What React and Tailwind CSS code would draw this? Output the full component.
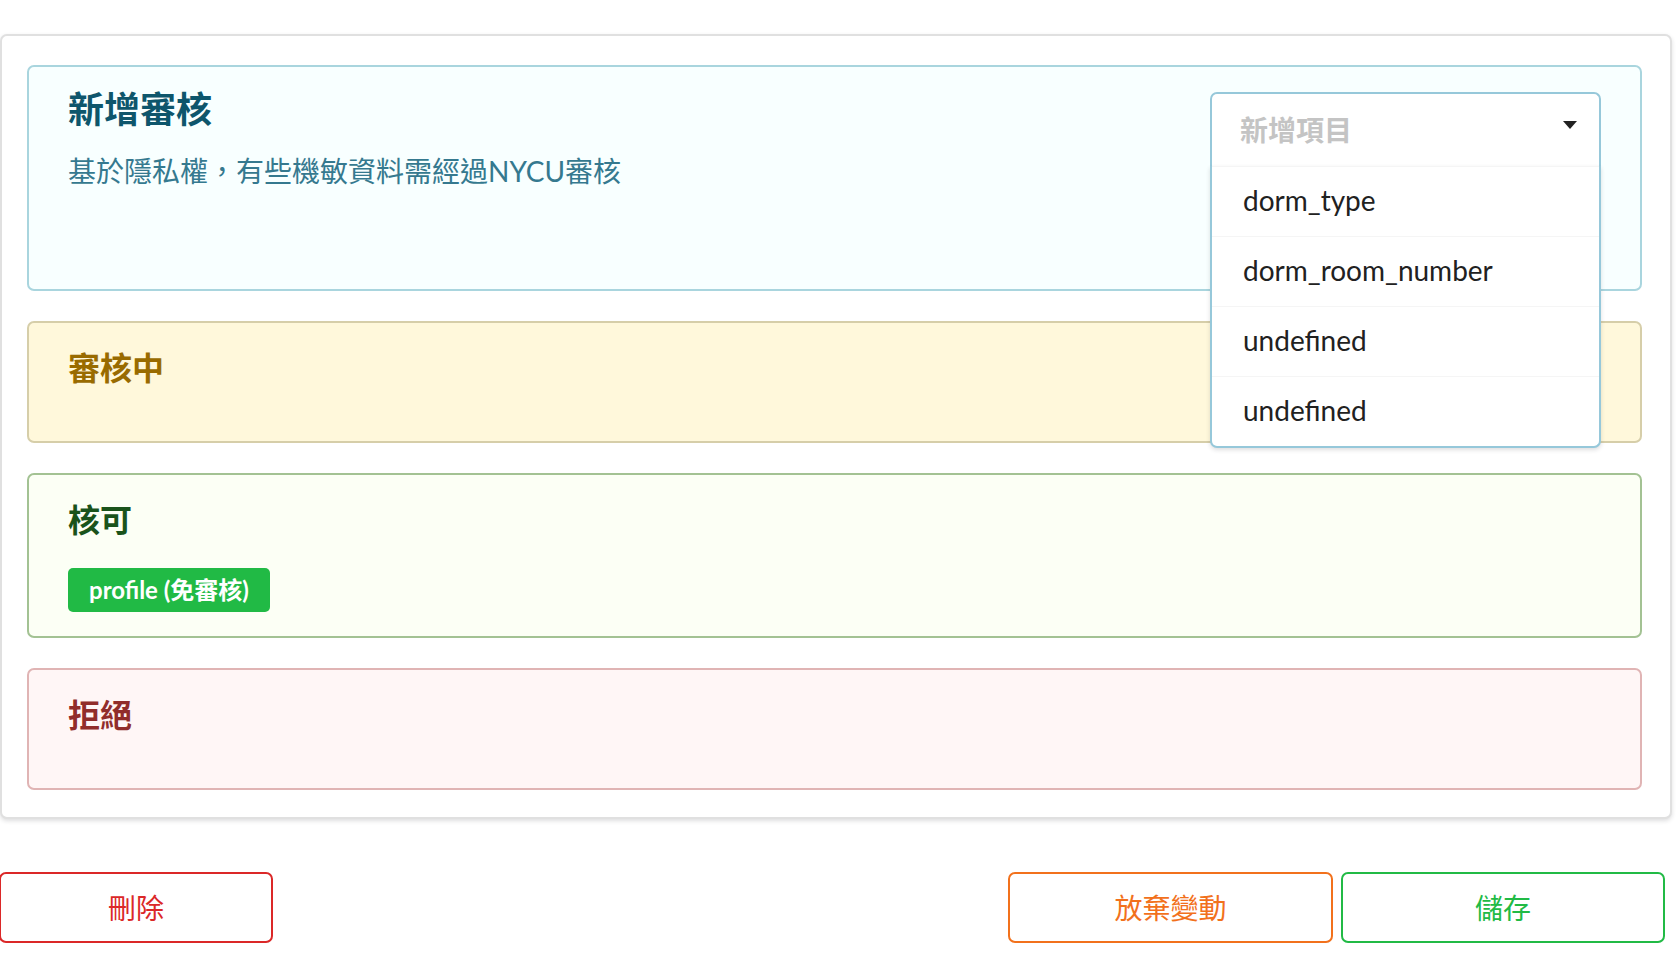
import React from 'react';

const options = ['dorm_type', 'dorm_room_number', 'undefined', 'undefined'];

function Caret() {
  return (
    <svg width="14" height="8" viewBox="0 0 14 8" className="mb-[10px]">
      <path d="M0 0 L14 0 L7 8 Z" fill="#222" />
    </svg>
  );
}

function AddItemDropdown() {
  return (
    <div className="relative w-[391px] shrink-0">
      <div className="h-[74px] flex items-center justify-between pl-[28px] pr-[22px] bg-white border-2 border-b-0 border-[#96c8da] rounded-t-[7px]">
        <span className="text-[28px] font-bold text-[#c4c4c4]">新增項目</span>
        <Caret />
      </div>
      {/* open menu */}
      <div className="absolute left-0 right-0 top-full z-10 bg-white border-2 border-t-0 border-[#96c8da] rounded-b-[7px] shadow-[0_2px_4px_0_rgba(34,36,38,0.15)]">
        {options.map((opt, i) => (
          <div key={i} className="h-[70px] flex items-center pl-[31px] pb-[3px] border-t border-[#f5f5f5] text-[28px] text-[#212121]">
            {opt}
          </div>
        ))}
      </div>
    </div>
  );
}

function Section({ title, className, titleClass, height, children }) {
  return (
    <div className={`rounded-[7px] border-2 pl-[39px] pt-[25px] ${className} ${height}`}>
      <h3 className={`text-[32px] leading-[40px] font-bold ${titleClass}`}>{title}</h3>
      {children}
    </div>
  );
}

export default function App() {
  return (
    <div className="min-h-[968px] bg-white pt-[34px] font-[Lato,'Noto_Sans_CJK_TC',sans-serif]">
      <div className="w-[1672px] bg-white border-2 border-[#e0e0e0] rounded-[7px] shadow-[0_2px_4px_0_rgba(34,36,38,0.15)] pl-[25px] pr-[28px] pt-[29px] pb-[27px] flex flex-col gap-[30px]">
        {/* 新增審核 */}
        <div className="h-[226px] rounded-[7px] border-2 border-[#a9d5de] bg-[#f8ffff] flex justify-between">
          <div className="pl-[39px] pt-[20px]">
            <h2 className="text-[36px] leading-[44px] font-bold text-[#0e566c]">新增審核</h2>
            <p className="mt-[20px] text-[28px] leading-[40px] text-[#35798f]">基於隱私權，有些機敏資料需經過NYCU審核</p>
          </div>
          <div className="pt-[25px] pr-[39px]">
            <AddItemDropdown />
          </div>
        </div>

        <Section title="審核中" height="h-[122px]" className="border-[#d6cea9] bg-[#fff8db]" titleClass="text-[#996b00]" />

        <Section title="核可" height="h-[165px]" className="border-[#a3c293] bg-[#fcfff5]" titleClass="text-[#1a531b]">
          <div className="mt-[28px] flex">
            <span className="h-[44px] px-[21px] rounded-[5px] bg-[#21ba45] text-white text-[24px] font-bold flex items-center">
              profile (免審核)
            </span>
          </div>
        </Section>

        <Section title="拒絕" height="h-[122px]" className="border-[#e0b4b4] bg-[#fff6f6]" titleClass="text-[#912d2b]" />
      </div>

      <div className="mt-[53px] w-[1665px] flex justify-between">
        <button className="-ml-[1px] w-[274px] h-[71px] rounded-[7px] border-2 border-[#db2828] bg-white text-[28px] text-[#db2828]">刪除</button>
        <div className="flex gap-[8px]">
          <button className="w-[325px] h-[71px] rounded-[7px] border-2 border-[#f2711c] bg-white text-[28px] text-[#f2711c]">放棄變動</button>
          <button className="w-[324px] h-[71px] rounded-[7px] border-2 border-[#21ba45] bg-white text-[28px] text-[#21ba45]">儲存</button>
        </div>
      </div>
    </div>
  );
}
